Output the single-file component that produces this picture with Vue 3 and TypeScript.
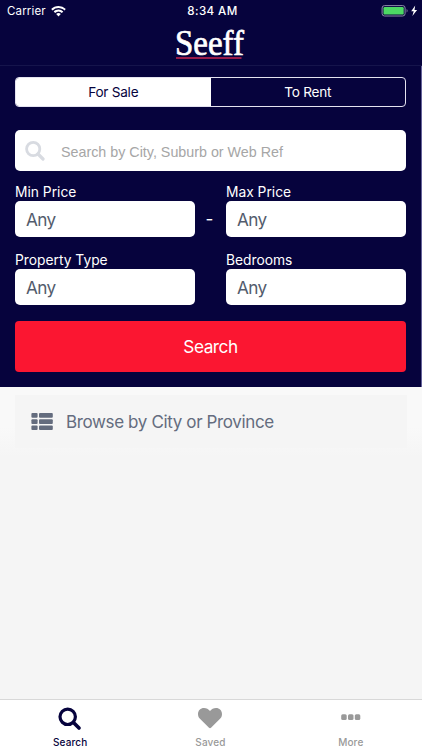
<script setup lang="ts">
import { ref } from 'vue'

const mode = ref<'sale' | 'rent'>('sale')
const query = ref('')
const tabs = ['Search', 'Saved', 'More']
const activeTab = ref('Search')
</script>

<template>
  <div class="screen">
    <header class="top">
      <div class="status">
        <div class="carrier">
          <span>Carrier</span>
          <svg width="15" height="11" viewBox="0 0 15 11" fill="#fff">
            <path d="M7.5 0C4.7 0 2.1 1.1.2 2.9l1.4 1.5A8.6 8.6 0 0 1 7.5 2.1c2.3 0 4.3.9 5.9 2.3l1.4-1.5A10.6 10.6 0 0 0 7.5 0Z" />
            <path d="M7.5 3.6c-1.8 0-3.5.7-4.8 1.9l1.4 1.5a5 5 0 0 1 6.8 0l1.4-1.5a7 7 0 0 0-4.8-1.9Z" />
            <path d="M7.5 7.1c-.9 0-1.7.3-2.3.9l2.3 2.6L9.8 8c-.6-.6-1.4-.9-2.3-.9Z" />
          </svg>
        </div>
        <div class="time">8:34 AM</div>
        <div class="power">
          <svg width="37" height="12" viewBox="0 0 37 12">
            <rect x="1.1" y=".6" width="23" height="10.4" rx="2.4" fill="none" stroke="#8d8ca9" />
            <rect x="2.5" y="2" width="20.2" height="7.6" rx="1.2" fill="#4cd964" />
            <path d="M25.6 4.1c1.3.4 1.3 3 0 3.4Z" fill="#8d8ca9" />
            <path d="M34.2.6 30.2 6.2h2.500L31.400 11l4.700-6h-2.600Z" fill="#fff" />
          </svg>
        </div>
      </div>
      <svg class="logo" width="74" height="43" viewBox="0 0 74 43">
        <text x="0" y="33" textLength="69" lengthAdjust="spacingAndGlyphs">Seeff</text>
        <rect x="1" y="35" width="65.500" height="2" fill="#971c4b" />
      </svg>
    </header>

    <section class="form">
      <div class="segments">
        <button :class="{ on: mode === 'sale' }" @click="mode = 'sale'"><span>For Sale</span></button>
        <button :class="{ on: mode === 'rent' }" @click="mode = 'rent'"><span>To Rent</span></button>
      </div>
      <label class="query">
        <svg width="20" height="20" viewBox="0 0 20 20" fill="none" stroke="#d8dbe1">
          <circle cx="8.2" cy="8" r="6.6" stroke-width="2.8" />
          <path d="m13 13 5 5" stroke-width="3.2" stroke-linecap="round" />
        </svg>
        <input v-model="query" placeholder="Search by City, Suburb or Web Ref" />
      </label>
      <div class="fields">
        <div class="field"><span class="label">Min Price</span><div class="select">Any</div></div>
        <span class="dash">-</span>
        <div class="field"><span class="label">Max Price</span><div class="select">Any</div></div>
        <div class="field"><span class="label">Property Type</span><div class="select">Any</div></div>
        <span></span>
        <div class="field"><span class="label">Bedrooms</span><div class="select">Any</div></div>
      </div>
      <button class="submit">Search</button>
    </section>

    <main class="body">
      <div class="browse">
        <svg width="22" height="18" viewBox="0 0 22 18" fill="#646c7e">
          <template v-for="y in [0, 6.2, 12.4]" :key="y">
            <rect x=".4" :y="y" width="6.2" height="4.7" rx="1" />
            <rect x="8" :y="y" width="13.8" height="4.7" rx="1" />
          </template>
        </svg>
        <span>Browse by City or Province</span>
      </div>
    </main>

    <nav class="tabs">
      <button v-for="tab in tabs" :key="tab" :class="{ active: tab === activeTab }" @click="activeTab = tab">
        <svg v-if="tab === 'Search'" width="24" height="24" viewBox="0 0 24 24" fill="none" stroke="currentColor">
          <circle cx="9.7" cy="9.8" r="7.7" stroke-width="3.2" />
          <path d="m15.7 15.8 5.3 5.200" stroke-width="3.700" stroke-linecap="round" />
        </svg>
        <svg v-else-if="tab === 'Saved'" width="24" height="24" viewBox="0 0 24 24" fill="currentColor">
          <path d="M12 21.2c-.4 0-.7-.2-1-.5L2.200 12.100C.8 10.700 0 9.100 0 7.200 0 3.600 2.500 1.100 6 1.100c2.600 0 4.300 1.300 6 3 1.700-1.700 3.400-3 6-3 3.500 0 6 2.500 6 6.100 0 1.900-.8 3.500-2.200 4.900L13 20.700c-.3.300-.6.5-1 .5Z" />
        </svg>
        <svg v-else width="24" height="24" viewBox="0 0 24 24" fill="currentColor">
          <rect v-for="x in [2.2, 9, 15.8]" :key="x" :x="x" y="7.3" width="5.5" height="5.700" rx="1.5" />
        </svg>
        <span>{{ tab }}</span>
      </button>
    </nav>
  </div>
</template>

<style>
body {
  margin: 0;
}
</style>

<style scoped>
.screen {
  width: 422px;
  height: 750px;
  display: flex;
  flex-direction: column;
  overflow: hidden;
  background: #f5f5f5;
  color: #fff;
  font-family: Inter, "Liberation Sans", sans-serif;
}
button {
  margin: 0;
  padding: 0;
  border: 0;
  background: none;
  color: inherit;
  font: inherit;
  letter-spacing: inherit;
}
svg {
  display: block;
  flex: none;
}
.top {
  box-sizing: border-box;
  height: 66px;
  background: #06033d;
  border-bottom: 1px solid #15144b;
}
.status {
  display: grid;
  grid-template-columns: 1fr auto 1fr;
  align-items: center;
  height: 22px;
  padding: 0 4px 0 7px;
  font-size: 11.5px;
}
.carrier {
  display: flex;
  align-items: center;
  gap: 5px;
  letter-spacing: 0.15px;
}
.time {
  font-weight: 550;
  font-size: 11.6px;
  letter-spacing: 0.4px;
}
.power {
  display: flex;
  justify-content: flex-end;
}
.logo {
  margin-left: 175px;
}
.logo text {
  fill: #fff;
  stroke: #fff;
  stroke-width: 0.7px;
  font: 36px "Liberation Serif", serif;
}
.form {
  box-sizing: border-box;
  height: 321px;
  padding: 11px 15px 0;
  background: #06033d;
  border-right: 1px solid #65629a;
}
.segments {
  box-sizing: border-box;
  width: 391px;
  height: 30px;
  display: grid;
  grid-template-columns: 1fr 1fr;
  border: 1px solid #e4e3f0;
  border-radius: 4px;
  overflow: hidden;
  font-size: 13.6px;
  letter-spacing: -0.25px;
}
.segments .on {
  background: #fff;
  color: #06033d;
}
.query {
  box-sizing: border-box;
  width: 391px;
  height: 41px;
  margin-top: 23px;
  padding: 0 10px;
  display: flex;
  align-items: center;
  gap: 16px;
  border-radius: 5px;
  background: #fff;
}
.query input {
  flex: 1;
  min-width: 0;
  padding: 3px 0 0;
  border: 0;
  outline: 0;
  background: none;
  font: 14.3px "Liberation Sans", sans-serif;
}
.query input::placeholder {
  color: #a6a6a6;
  opacity: 1;
}
.fields {
  width: 391px;
  margin-top: 12px;
  display: grid;
  grid-template-columns: 180px 31px 180px;
  row-gap: 14px;
}
.field {
  display: flex;
  flex-direction: column;
}
.label {
  height: 18px;
  line-height: 18px;
  font-size: 13.8px;
}
.select {
  box-sizing: border-box;
  height: 36px;
  padding-left: 11px;
  border-radius: 5px;
  background: #fff;
  color: #535c6d;
  font-size: 17.2px;
  letter-spacing: -0.6px;
  line-height: 37px;
}
.dash {
  padding: 24px 2px 0 0;
  text-align: center;
  font-size: 17px;
  line-height: 24px;
}
.submit {
  width: 391px;
  height: 51px;
  margin-top: 15.5px;
  border-radius: 4px;
  background: #fb1631;
  font-size: 17.3px;
  letter-spacing: -0.5px;
}
.body {
  flex: 1;
  padding: 8px 15px 0;
  background: linear-gradient(#f9f9f9 0 40px, #f5f5f5 70px);
}
.browse {
  box-sizing: border-box;
  height: 53px;
  padding-left: 16px;
  display: flex;
  align-items: center;
  gap: 13px;
  background: #f5f5f5;
  color: #646c7e;
  font-size: 17px;
  letter-spacing: -0.37px;
}
.tabs {
  box-sizing: border-box;
  height: 51px;
  padding-right: 1px;
  display: grid;
  grid-template-columns: repeat(3, 1fr);
  border-top: 1px solid #d8d8d8;
  background: #fff;
  color: #999;
}
.tabs button {
  display: flex;
  flex-direction: column;
  align-items: center;
  padding-top: 7px;
  font-size: 10px;
  font-weight: 500;
  line-height: 12px;
  letter-spacing: 0.15px;
}
.tabs span {
  margin-top: 5px;
}
.tabs .active {
  color: #06033d;
}
</style>
